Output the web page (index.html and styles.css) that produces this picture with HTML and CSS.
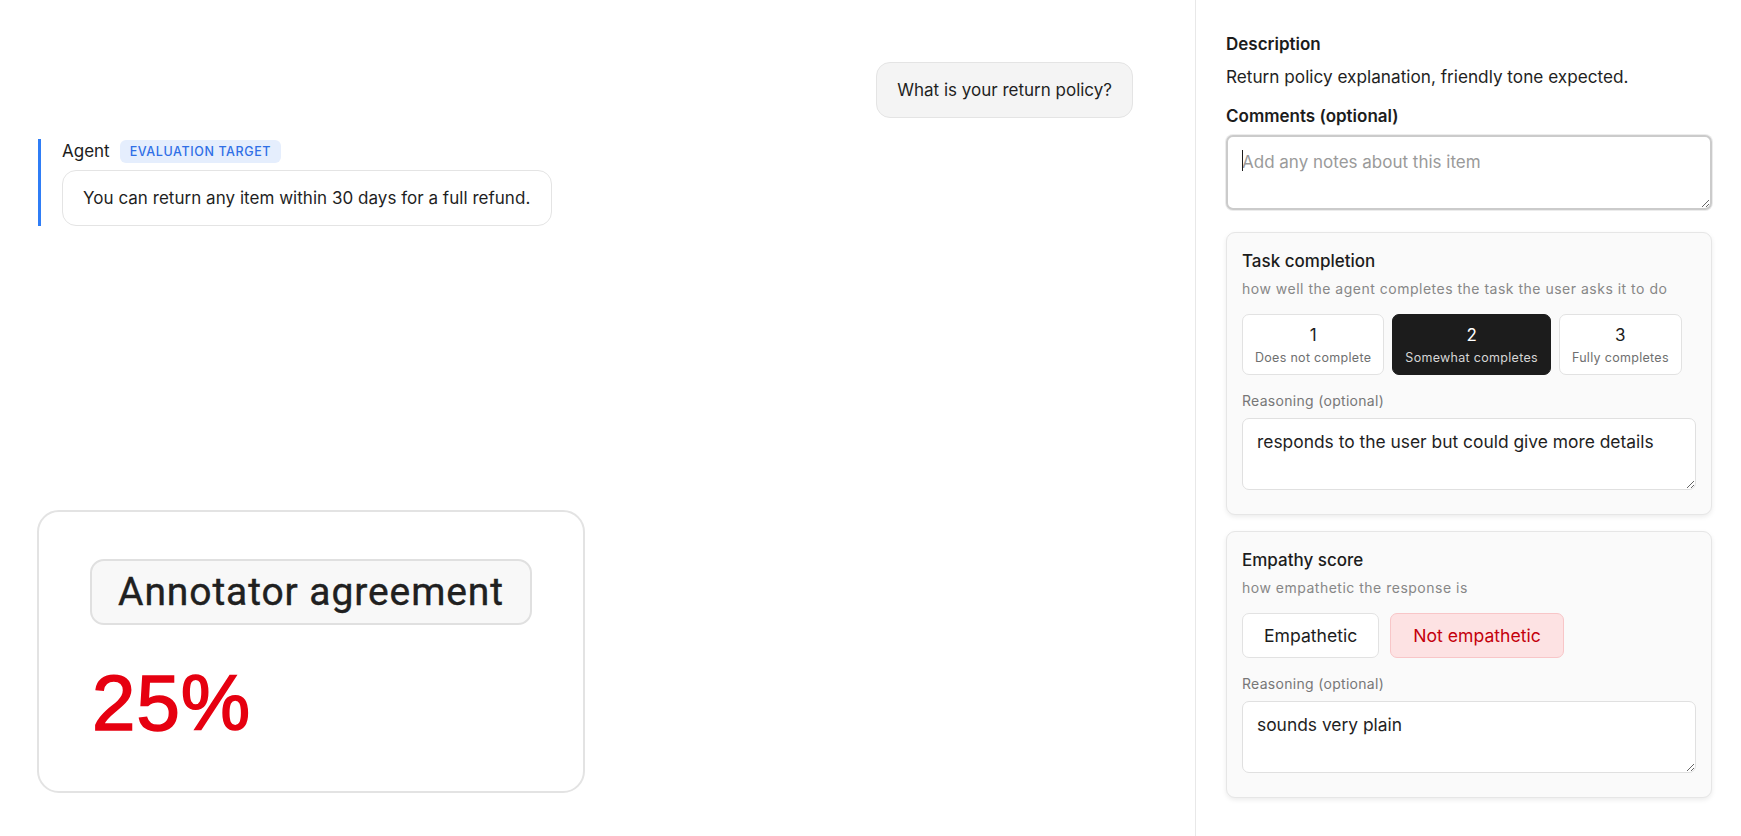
FILE: index.html
```html
<!DOCTYPE html>
<html lang="en">
<head>
<meta charset="utf-8">
<title>Annotation</title>
<link rel="stylesheet" href="styles.css">
</head>
<body>
<div class="layout">
  <main class="conversation">
    <div class="user-row">
      <div class="bubble bubble-user">What is your return policy?</div>
    </div>
    <section class="agent-turn">
      <div class="agent-head">
        <span class="agent-name">Agent</span>
        <span class="badge">EVALUATION TARGET</span>
      </div>
      <div class="bubble bubble-agent">You can return any item within 30 days for a full refund.</div>
    </section>
    <div class="agreement-card">
      <div class="agreement-label">Annotator agreement</div>
      <div class="agreement-value">25%</div>
    </div>
  </main>

  <aside class="panel">
    <h3 class="field-title">Description</h3>
    <p class="description">Return policy explanation, friendly tone expected.</p>
    <h3 class="field-title comments-title">Comments (optional)</h3>
    <div class="comments-wrap">
      <textarea class="comments" placeholder="Add any notes about this item" autofocus></textarea>
      <span class="caret"></span>
    </div>

    <section class="metric">
      <h4 class="metric-title">Task completion</h4>
      <p class="metric-sub">how well the agent completes the task the user asks it to do</p>
      <div class="options">
        <button class="scale-btn"><span class="num">1</span><span class="lbl">Does not complete</span></button>
        <button class="scale-btn selected"><span class="num">2</span><span class="lbl">Somewhat completes</span></button>
        <button class="scale-btn"><span class="num">3</span><span class="lbl">Fully completes</span></button>
      </div>
      <label class="reason-label">Reasoning (optional)</label>
      <textarea class="reason">responds to the user but could give more details</textarea>
    </section>

    <section class="metric">
      <h4 class="metric-title">Empathy score</h4>
      <p class="metric-sub">how empathetic the response is</p>
      <div class="options options-wide">
        <button class="choice-btn">Empathetic</button>
        <button class="choice-btn negative">Not empathetic</button>
      </div>
      <label class="reason-label">Reasoning (optional)</label>
      <textarea class="reason">sounds very plain</textarea>
    </section>
  </aside>
</div>
</body>
</html>
```

FILE: styles.css
```css
* {
  box-sizing: border-box;
}

html, body {
  margin: 0;
  padding: 0;
  background: #ffffff;
}

body {
  font-family: Inter, "Noto Sans", "Liberation Sans", sans-serif;
  color: #1c1c1c;
}

.layout {
  display: flex;
  height: 836px;
  overflow: hidden;
}

/* ---------- conversation pane ---------- */

.conversation {
  flex: 1;
  padding: 62px 62px 0 38px;
  display: flex;
  flex-direction: column;
  align-items: flex-start;
}

.user-row {
  align-self: stretch;
  display: flex;
  justify-content: flex-end;
}

.bubble {
  font-size: 17px;
  line-height: 24px;
  border-radius: 14px;
  border: 1px solid #e4e4e4;
  padding: 15px 20px;
  color: #1f1f1f;
}

.bubble-user {
  background: #f4f4f4;
}

.bubble-agent {
  background: #ffffff;
  padding: 15px 21px 15px 20px;
  letter-spacing: 0.03px;
}

.agent-turn {
  margin-top: 21px;
  border-left: 3px solid #2f7df6;
  padding-left: 21px;
  display: flex;
  flex-direction: column;
  align-items: flex-start;
  gap: 7px;
}

.agent-head {
  display: flex;
  align-items: center;
  gap: 10px;
  height: 24px;
}

.agent-name {
  font-size: 17px;
  line-height: 24px;
  color: #1c1c1c;
}

.badge {
  background: #e5eefd;
  color: #2f6fe6;
  font-size: 12.5px;
  font-weight: 500;
  letter-spacing: 0.6px;
  line-height: 23px;
  height: 23px;
  padding: 0 10px;
  border-radius: 6px;
}

.agreement-card {
  margin-top: 284px;
  margin-left: -1px;
  width: 548px;
  height: 283px;
  border: 2px solid #e3e3e3;
  border-radius: 22px;
  padding: 47px 51px 0 51px;
  background: #ffffff;
}

.agreement-label {
  height: 66px;
  border: 2px solid #e0e0e0;
  border-radius: 14px;
  background: #f8f8f8;
  font-family: Roboto, "Liberation Sans", sans-serif;
  font-size: 39px;
  font-weight: 400;
  letter-spacing: 0.9px;
  line-height: 62px;
  text-align: center;
  color: #202020;
  -webkit-text-stroke: 0.4px #202020;
}

.agreement-value {
  margin-top: 38px;
  font-family: "Liberation Sans", Arial, sans-serif;
  font-weight: 400;
  font-size: 78px;
  line-height: 80px;
  color: #e60010;
  -webkit-text-stroke: 1.6px #e60010;
  letter-spacing: 1px;
  padding-left: 2px;
}

/* ---------- annotation panel ---------- */

.panel {
  width: 546px;
  flex: none;
  border-left: 1px solid #e8e8e8;
  padding: 32px 29px 0 30px;
  display: flex;
  flex-direction: column;
}

.field-title {
  margin: 0;
  font-size: 17px;
  line-height: 24px;
  font-weight: 600;
  color: #1c1c1c;
}

.description {
  margin: 9px 0 0;
  font-size: 17.2px;
  line-height: 24px;
  color: #1f1f1f;
}

.comments-title {
  margin-top: 15px;
}

.comments-wrap {
  position: relative;
  margin-top: 7px;
  height: 75px;
}

.comments {
  display: block;
  height: 75px;
  width: 100%;
  border: 2px solid #cbcbcb;
  border-radius: 7px;
  padding: 13px 14px 11px;
  font-family: inherit;
  font-size: 17px;
  line-height: 24px;
  color: #1f1f1f;
  resize: vertical;
  outline: none;
  box-shadow: 0 0 0 1px #ececec;
}

.comments::placeholder {
  color: #9a9a9a;
}

/* text cursor sitting at the start of the empty field */
.caret {
  position: absolute;
  left: 16px;
  top: 15px;
  width: 1px;
  height: 21px;
  background: #1c1c1c;
}

.metric {
  margin-top: 22px;
  background: #fafafa;
  border: 1px solid #e6e6e6;
  border-radius: 9px;
  padding: 16px 15px 24px 15px;
  box-shadow: 0 2px 5px rgba(0, 0, 0, 0.08);
  display: flex;
  flex-direction: column;
}

.metric + .metric {
  margin-top: 16px;
}

.metric-title {
  margin: 0;
  font-size: 17px;
  line-height: 24px;
  font-weight: 500;
  color: #1c1c1c;
}

.metric-sub {
  margin: 6px 0 0;
  font-size: 14px;
  line-height: 20px;
  letter-spacing: 0.5px;
  color: #878787;
}

.options {
  margin-top: 15px;
  display: flex;
  gap: 8px;
}

.options-wide {
  gap: 11px;
}

.scale-btn {
  display: flex;
  flex-direction: column;
  align-items: center;
  padding: 8px 12px 7px;
  background: #ffffff;
  border: 1px solid #e2e2e2;
  border-radius: 7px;
  font-family: inherit;
  color: #1c1c1c;
  cursor: pointer;
}

.scale-btn .num {
  font-size: 17px;
  line-height: 24px;
}

.scale-btn .lbl {
  margin-top: 2px;
  font-size: 12.5px;
  line-height: 18px;
  letter-spacing: 0.3px;
  color: #6f6f6f;
}

.scale-btn.selected {
  background: #1c1c1c;
  border-color: #1c1c1c;
  color: #ffffff;
}

.scale-btn.selected .lbl {
  color: #d6d6d6;
}

.choice-btn {
  padding: 9px 21px;
  background: #ffffff;
  border: 1px solid #e2e2e2;
  border-radius: 7px;
  font-family: inherit;
  font-size: 17.6px;
  line-height: 25px;
  color: #1c1c1c;
  cursor: pointer;
}

.choice-btn.negative {
  background: #fde2e3;
  border-color: #f8c6c8;
  color: #c4000c;
  padding: 9px 22px;
}

.reason-label {
  margin-top: 16px;
  font-size: 14px;
  line-height: 20px;
  letter-spacing: 0.3px;
  color: #777777;
}

.reason {
  margin-top: 7px;
  height: 72px;
  width: 100%;
  border: 1px solid #e0e0e0;
  border-radius: 7px;
  background: #ffffff;
  padding: 11px 14px;
  font-family: inherit;
  font-size: 17.4px;
  line-height: 24px;
  color: #1f1f1f;
  resize: vertical;
  outline: none;
}
```
